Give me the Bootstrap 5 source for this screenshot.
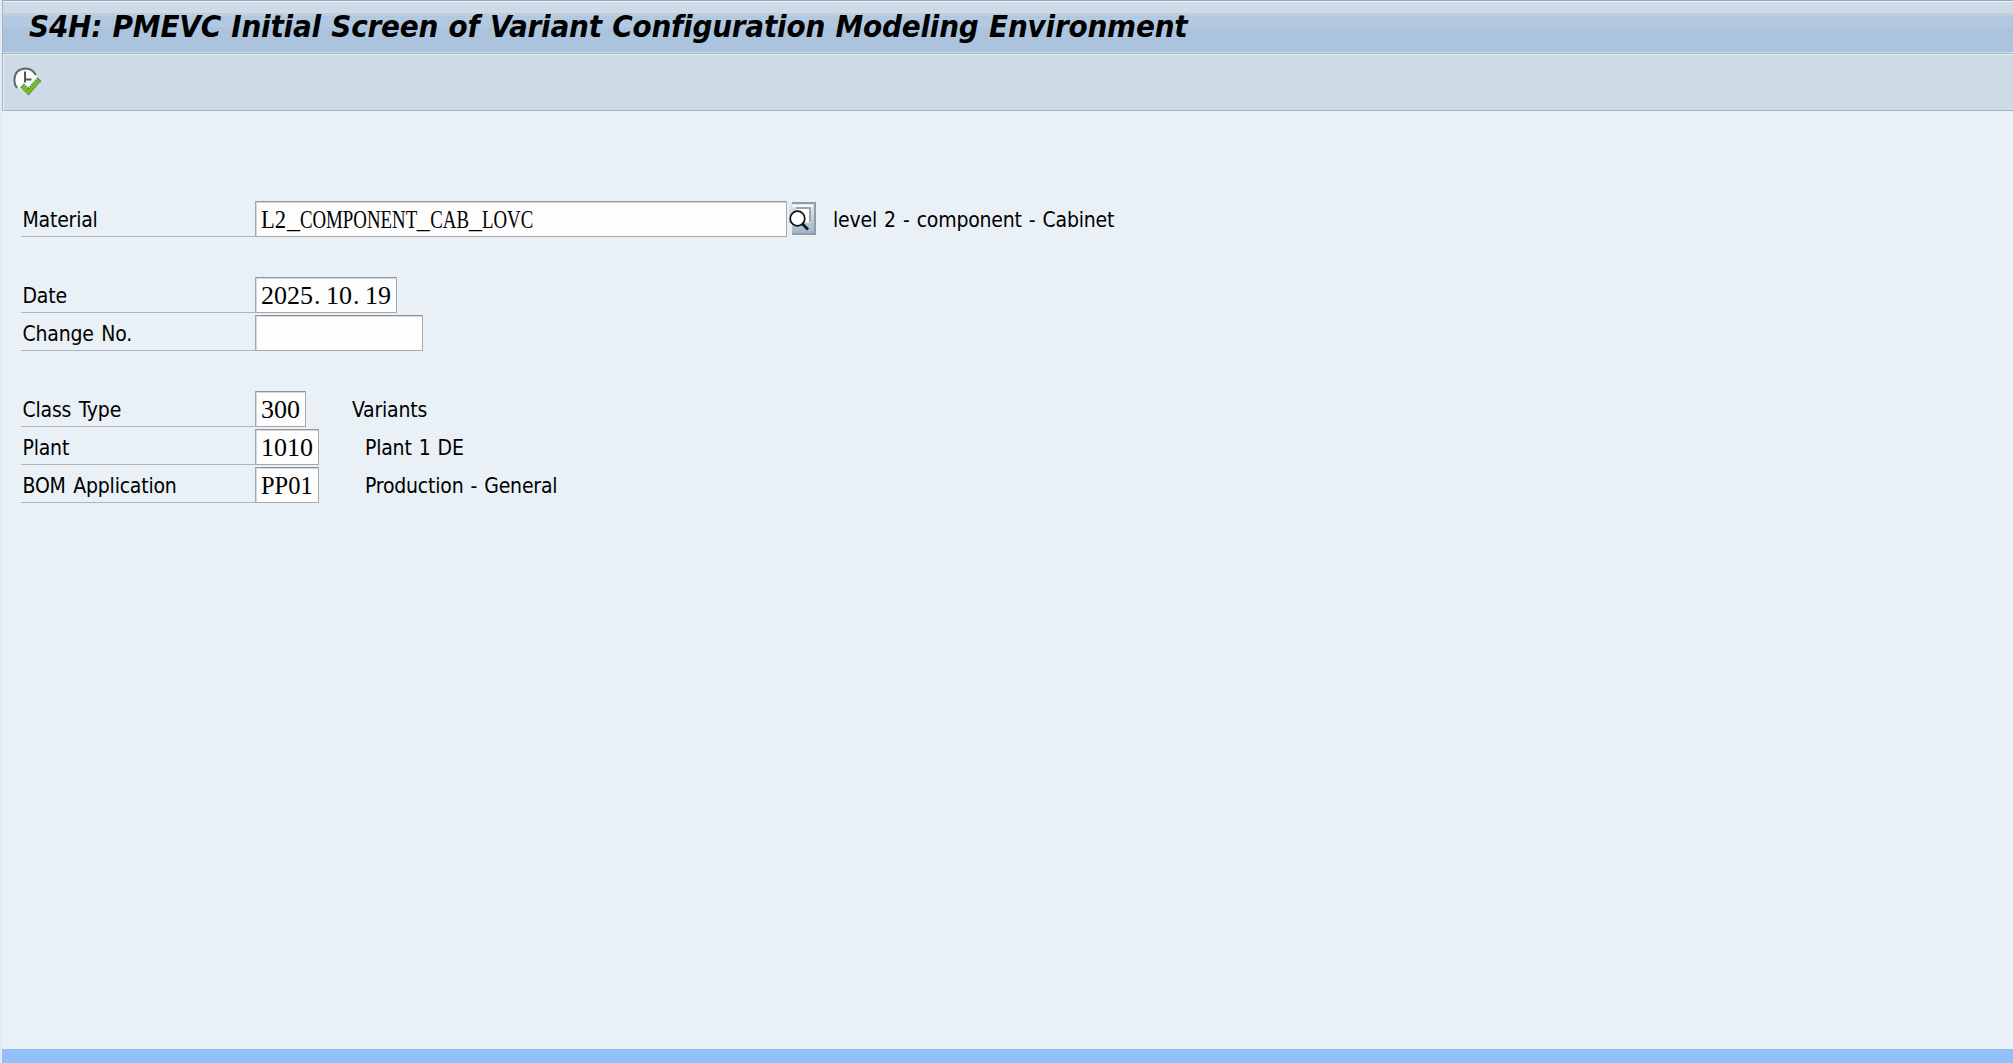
<!DOCTYPE html>
<html lang="en">
<head>
<meta charset="utf-8">
<meta name="viewport" content="width=device-width, initial-scale=1">
<title>S4H: PMEVC</title>
<link href="https://cdn.jsdelivr.net/npm/bootstrap@5.3.0/dist/css/bootstrap.min.css" rel="stylesheet">
<style>
body{background:#e9f0f6;color:#000;font-family:"DejaVu Sans Condensed","DejaVu Sans",sans-serif;font-stretch:condensed;font-size:21px;line-height:36px;border-left:2px solid #e4eaf3}
.titlebar{height:54px;border-top:1px solid #91a9c2;border-left:1px solid #a3b6c8;border-bottom:1px solid #a3b4c4;
background:linear-gradient(#eaf2f8 0 1px,#d0dde9 1px 3px,#cddbe6 3px 12px,#bccfde 12px 15px,#b2c9df 15px 26px,#abc3dc 26px 50px,#a9c2da 50px 51px,#d3dfea 51px)}
.titlebar h1{font-size:31px;font-weight:700;font-style:italic;line-height:50px;padding-left:26px;letter-spacing:-.2px;word-spacing:.9px}
.toolstrip{height:57px;background:#cddbe6;border:1px solid #a3b6c8;border-width:0 0 1px 1px;box-shadow:inset 1px 1px #eaf2f8;padding:12px 0 0 10px}
.form-area{padding:90px 0 0 19px;gap:2px}
.field-row{height:36px}
.group-gap{margin-top:38px}
.field-label{width:234px;padding-left:1.5px;border-bottom:1px solid #b1b5b9;line-height:38px;letter-spacing:-.2px;word-spacing:1.8px}
.field-box{height:36px;background:#fdfdfe;border:1px solid #a5a9ae;border-top-color:#8d949c;border-radius:1px;box-shadow:inset 1px 1px #d5d9de;padding-left:5px;font-family:"Liberation Serif",serif;font-size:26px;line-height:36px}
.w-mat{width:532px}.w-date{width:142px}.w-chg{width:168px}.w-3{width:51px}.w-4{width:64px}
.squeeze{display:inline-block;transform-origin:0 50%;transform:scaleX(.725)}
.squeeze i{display:inline-block;font-style:normal;width:17.900px;transform-origin:0 50%;transform:scaleX(1.38)}
.squeeze b{display:inline-block;font-weight:400;width:35.800px;transform-origin:0 50%;transform:scaleX(1.2)}
.squeeze-p{display:inline-block;transform-origin:0 50%;transform:scaleX(.94)}
.dot{display:inline-block;width:13px;padding-left:1px}
.field-text{line-height:38px;letter-spacing:-.2px;word-spacing:1.3px}
.ml-a{margin-left:16px}.ml-b{margin-left:46px}
.footer-line{height:14px;background:#92bff9;margin-left:-2px}
</style>
<script src="https://cdn.jsdelivr.net/npm/bootstrap@5.3.0/dist/js/bootstrap.bundle.min.js"></script>
</head>
<body class="vh-100 d-flex flex-column overflow-hidden">
<header class="titlebar flex-shrink-0"><h1 class="m-0 text-nowrap">S4H: PMEVC Initial Screen of Variant Configuration Modeling Environment</h1></header>
<nav class="toolstrip flex-shrink-0">
<svg class="d-block" width="30" height="32" viewBox="0 0 30 32">
<circle cx="13" cy="13.500" r="11.200" fill="#fbfcfc"/>
<path d="M4 22Q1 18 1.500 13Q2 3 13 2.500Q19 2.500 23 9" fill="none" stroke="#626569" stroke-width="2"/>
<path d="M12 5.500v11M12 13.500h6.500" stroke="#50555a" stroke-width="2" fill="none"/>
<path d="M9 19.500l6.500 6L26.500 13" fill="none" stroke="#4b8f50" stroke-width="5.500" stroke-dasharray="2 .6"/>
<path d="M9.500 20l6 6L25.500 14" fill="none" stroke="#78bd16" stroke-width="3"/>
</svg>
</nav>
<main class="form-area d-flex flex-column flex-grow-1">
<div class="field-row d-flex"><div class="field-label">Material</div><div class="field-box w-mat text-nowrap"><span class="squeeze"><b>L2</b><i>_</i>COMPONENT<i>_</i>CAB<i>_</i>LOVC</span></div>
<svg width="30" height="36" viewBox="0 0 30 36">
<defs><linearGradient id="g" x2="0" y2="1"><stop stop-color="#e2ebf3"/><stop offset="1" stop-color="#9fb3ca"/></linearGradient></defs>
<path d="M2 2h25v31H5V22H2z" fill="url(#g)"/><path d="M5 2h23v31H5" fill="none" stroke="#959ba3" stroke-width="2"/>
<path d="M5 4h21v2H5z" fill="#f5f8fb"/>
<path d="M9 6.500h15v15H9z" fill="#fff"/><path d="M9 7h14v14" fill="none" stroke="#a1a3a6" stroke-width="2"/>
<circle cx="10.500" cy="17.500" r="7.300" fill="#fff" stroke="#111" stroke-width="1.700"/><path d="M15 22.500l6 6" stroke="#111" stroke-width="2.600"/>
</svg>
<div class="field-text ml-a">level 2 - component - Cabinet</div></div>
<div class="field-row d-flex group-gap"><div class="field-label">Date</div><div class="field-box w-date text-nowrap">2025<span class="dot">.</span>10<span class="dot">.</span>19</div></div>
<div class="field-row d-flex"><div class="field-label">Change No.</div><div class="field-box w-chg"></div></div>
<div class="field-row d-flex group-gap"><div class="field-label">Class Type</div><div class="field-box w-3">300</div><div class="field-text ml-b">Variants</div></div>
<div class="field-row d-flex"><div class="field-label">Plant</div><div class="field-box w-4">1010</div><div class="field-text ml-b">Plant 1 DE</div></div>
<div class="field-row d-flex"><div class="field-label">BOM Application</div><div class="field-box w-4"><span class="squeeze-p">PP01</span></div><div class="field-text ml-b">Production - General</div></div>
</main>
<footer class="footer-line flex-shrink-0"></footer>
</body>
</html>
